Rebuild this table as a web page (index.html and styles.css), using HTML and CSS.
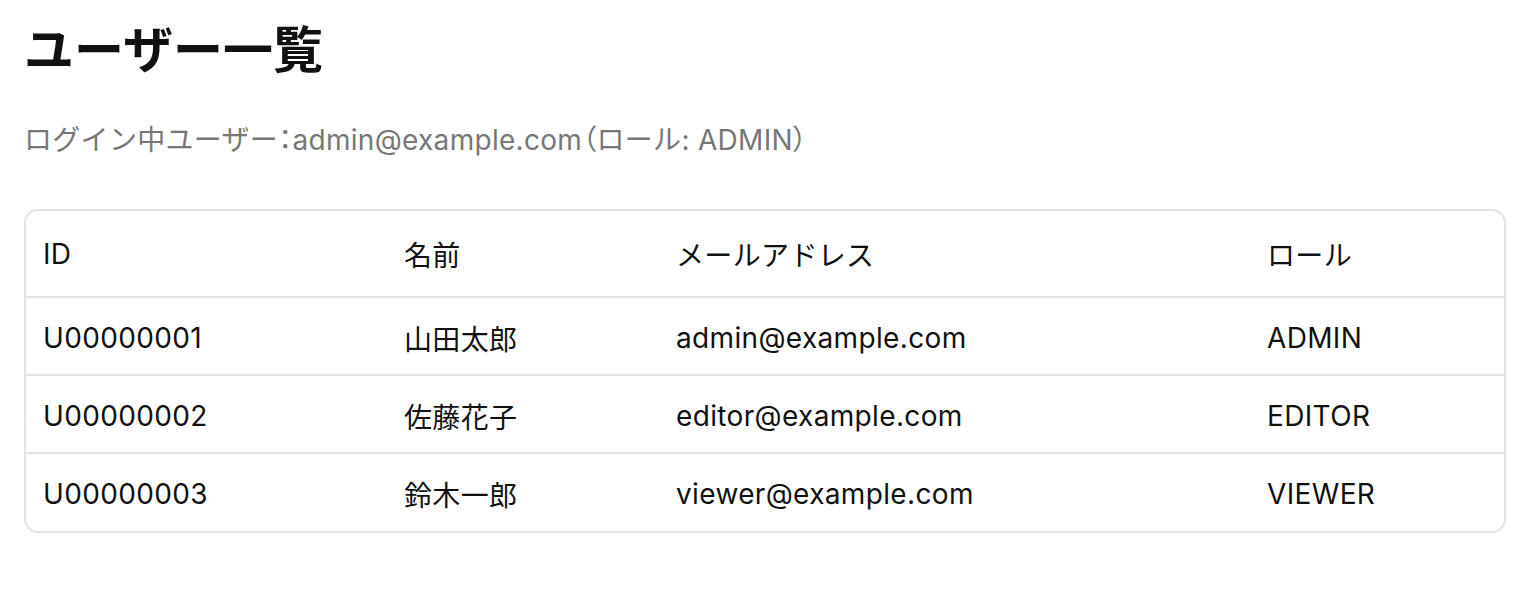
FILE: index.html
```html
<!DOCTYPE html>
<html lang="ja">
<head>
<meta charset="utf-8">
<title>ユーザー一覧</title>
<link rel="stylesheet" href="styles.css">
</head>
<body>
<main class="page">
  <h1 class="title">ユーザー一覧</h1>
  <p class="login">ログイン中ユーザー<span class="punct">：</span>admin@example.com<span class="punct">（</span>ロール: ADMIN<span class="punct">）</span></p>
  <div class="table-wrap">
    <table class="users">
      <thead>
        <tr>
          <th class="c-id">ID</th>
          <th class="c-name">名前</th>
          <th class="c-mail">メールアドレス</th>
          <th class="c-role">ロール</th>
        </tr>
      </thead>
      <tbody>
        <tr><td>U00000001</td><td>山田太郎</td><td>admin@example.com</td><td>ADMIN</td></tr>
        <tr><td>U00000002</td><td>佐藤花子</td><td>editor@example.com</td><td>EDITOR</td></tr>
        <tr><td>U00000003</td><td>鈴木一郎</td><td>viewer@example.com</td><td>VIEWER</td></tr>
      </tbody>
    </table>
  </div>
</main>
</body>
</html>
```
FILE: styles.css
```css
html, body {
  margin: 0;
  padding: 0;
  background: #fff;
}
body {
  font-family: "Inter", "Noto Sans CJK JP", sans-serif;
  color: #111;
}
.page {
  padding: 20px 30px 24px 24px;
}
.title {
  margin: 0;
  font-size: 50px;
  font-weight: 700;
  line-height: 60px;
  color: #111;
}
.login {
  margin: 44px 0 0;
  font-size: 28px;
  line-height: 32px;
  letter-spacing: 0.3px;
  color: #777;
}
.punct {
  font-feature-settings: "palt";
}
.table-wrap {
  margin-top: 53px;
  border: 2px solid #e4e4e4;
  border-radius: 14px;
  overflow: hidden;
}
.users {
  width: 100%;
  border-collapse: collapse;
  table-layout: fixed;
  font-size: 28px;
  letter-spacing: 0.35px;
}
.users th, .users td {
  box-sizing: border-box;
  text-align: left;
  padding: 0 17px;
  font-weight: 400;
  color: #111;
}
.users th {
  height: 86px;
}
.users td {
  height: 78px;
  padding-top: 3px;
  border-top: 2px solid #e4e4e4;
}
.c-id { width: 361px; }
.c-name { width: 272px; }
.c-mail { width: 591px; }
```
